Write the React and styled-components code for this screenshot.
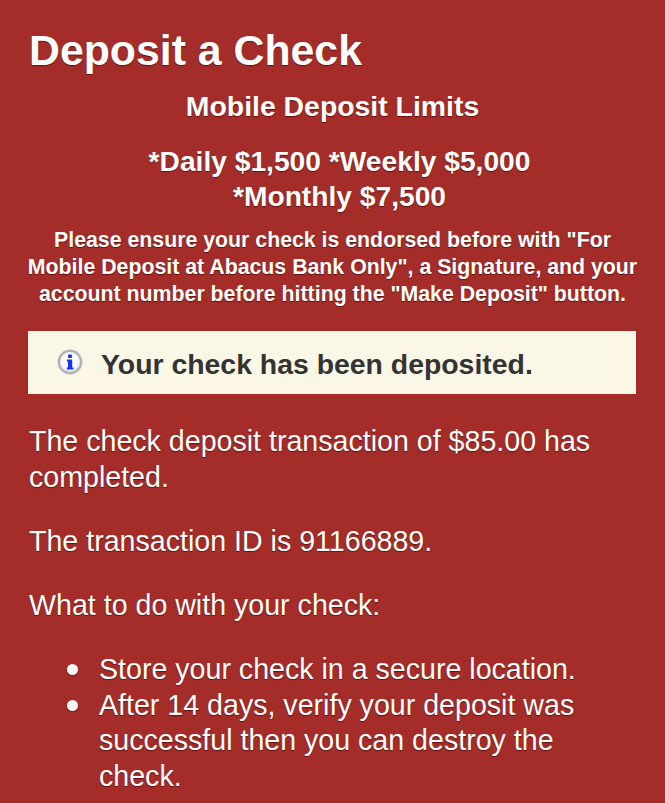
import React from 'react';
import styled, { createGlobalStyle } from 'styled-components';

const Global = createGlobalStyle`
  html, body { margin: 0; padding: 0; background: #a42d29; }
  body { font-family: "Liberation Sans", Arial, sans-serif; overflow: hidden; }
`;

const Page = styled.div`
  box-sizing: border-box;
  width: 665px;
  height: 803px;
  overflow: hidden;
  padding: 27px 29px 0 29px;
  background: #a42d29;
  color: #fff;
  text-shadow: 0 1px 1px rgba(60, 0, 0, 0.6);
`;

const Title = styled.h1`
  margin: 0;
  font-size: 42.8px;
  line-height: 46px;
  font-weight: 700;
`;

const LimitsHeading = styled.h3`
  margin: 16px 0 0;
  font-size: 28.4px;
  line-height: 35px;
  font-weight: 700;
  text-align: center;
`;

const LimitsValues = styled.h3`
  margin: 20px 0 0;
  padding-left: 14px;
  font-size: 28.2px;
  line-height: 35px;
  font-weight: 700;
  text-align: center;
`;

const Notice = styled.p`
  margin: 13px -2px 0;
  font-size: 21.3px;
  line-height: 27px;
  font-weight: 700;
  text-align: center;
`;

const Alert = styled.div`
  display: flex;
  align-items: center;
  gap: 18px;
  box-sizing: border-box;
  height: 63px;
  margin: 23px 0 0 -1px;
  padding: 0 29px 0 28px;
  background: #fbf7e6;
  color: #333;
  text-shadow: none;
  font-size: 28.4px;
  font-weight: 700;
`;

const AlertIcon = styled.svg`
  width: 26px;
  height: 26px;
  flex: none;
  margin: -1px 0 0 1px;
`;

const AlertText = styled.span`
  padding-top: 3px;
`;

const Body = styled.p`
  margin: ${p => p.$top}px 0 0;
  font-size: 28.6px;
  line-height: 36px;
`;

const List = styled.ul`
  margin: 29px 0 0;
  padding: 0 0 0 70px;
  list-style: none;
  font-size: 28.6px;
  line-height: 35.6px;
`;

const Item = styled.li`
  position: relative;

  &::before {
    content: "";
    position: absolute;
    left: -32px;
    top: 12px;
    width: 11px;
    height: 11px;
    border-radius: 50%;
    background: #fff;
    box-shadow: 0 1px 1px rgba(60, 0, 0, 0.5);
  }
`;

export default function App() {
  return (
    <Page>
      <Global />
      <Title>Deposit a Check</Title>
      <LimitsHeading>Mobile Deposit Limits</LimitsHeading>
      <LimitsValues>*Daily $1,500 *Weekly $5,000<br />*Monthly $7,500</LimitsValues>
      <Notice>
        Please ensure your check is endorsed before with "For Mobile Deposit at Abacus Bank Only", a Signature, and your account number before hitting the "Make Deposit" button.
      </Notice>
      <Alert>
        <AlertIcon viewBox="0 0 26 26">
          <defs>
            <radialGradient id="infoFill" cx="50%" cy="42%" r="55%">
              <stop offset="0%" stopColor="#ffffff" />
              <stop offset="70%" stopColor="#f6f8fe" />
              <stop offset="100%" stopColor="#dde1f2" />
            </radialGradient>
          </defs>
          <circle cx="13" cy="13" r="11.2" fill="url(#infoFill)" stroke="#b2b2b8" strokeWidth="2.4" />
          <rect x="11" y="5.4" width="4" height="3.6" rx="1" fill="#1a30ea" />
          <path d="M10 10.6h5.2v7.8h1.2v2.2h-6.6v-2.2h1.2v-5.6h-1z" fill="#1a30ea" />
        </AlertIcon>
        <AlertText>Your check has been deposited.</AlertText>
      </Alert>
      <Body $top={29}>The check deposit transaction of $85.00 has completed.</Body>
      <Body $top={28}>The transaction ID is 91166889.</Body>
      <Body $top={28}>What to do with your check:</Body>
      <List>
        <Item>Store your check in a secure location.</Item>
        <Item>After 14 days, verify your deposit was successful then you can destroy the check.</Item>
      </List>
    </Page>
  );
}
